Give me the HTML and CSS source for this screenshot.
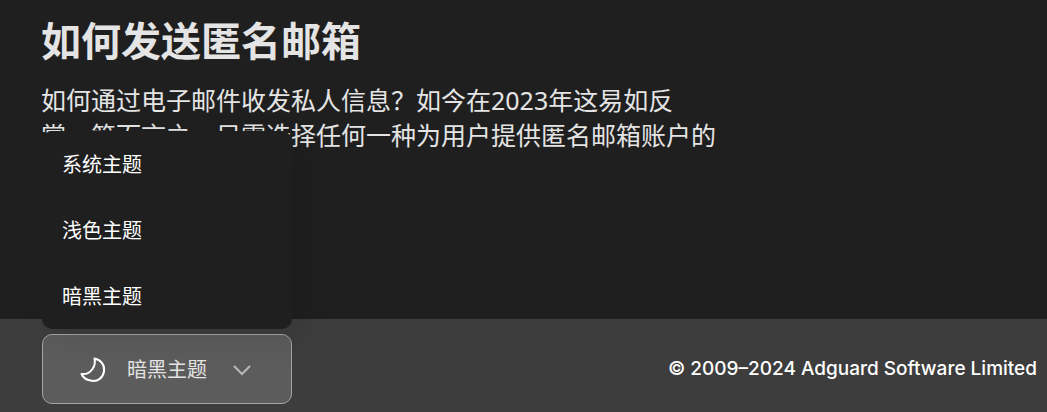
FILE: index.html
```html
<!DOCTYPE html>
<html lang="zh-CN">
<head>
    <meta charset="UTF-8">
    <meta name="viewport" content="width=device-width, initial-scale=1.0">
    <title>如何发送匿名邮箱</title>
    <link rel="stylesheet" href="styles.css">
</head>
<body>
    <main class="article">
        <h1>如何发送匿名邮箱</h1>
        <p>如何通过电子邮件收发私人信息？如今在2023年这易如反掌。简而言之，只需选择任何一种为用户提供匿名邮箱账户的</p>
    </main>

    <footer class="footer">
        <div class="theme">
            <div class="theme-menu" id="themeMenu">
                <button type="button">系统主题</button>
                <button type="button">浅色主题</button>
                <button type="button">暗黑主题</button>
            </div>
            <button type="button" class="theme-toggle" aria-expanded="true" aria-controls="themeMenu">
                <svg class="moon" viewBox="0 0 26 26" aria-hidden="true">
                    <path d="M14.5 1.5C21 3 25 8 24 14.5C23 21 17.500 24.500 12 23.800C7 23.300 3 20.500 1.500 17C5.500 17.500 10 15.500 12.500 12C14.800 8.800 15.300 5 14.500 1.500Z"/>
                </svg>
                <span>暗黑主题</span>
                <svg class="arrow" viewBox="0 0 20 20" aria-hidden="true">
                    <path d="M2 6L10 14L18 6"/>
                </svg>
            </button>
        </div>
        <span class="copyright">© 2009–2024 Adguard Software Limited</span>
    </footer>
</body>
</html>
```
FILE: styles.css
```css
* {
    box-sizing: border-box;
}

body {
    display: flex;
    flex-direction: column;
    min-height: 100vh;
    margin: 0;
    background-color: #1f1f1f;
    color: #e4e4e4;
    font-family: "Noto Sans", "Noto Sans CJK SC", sans-serif;
}

.article {
    flex: 1;
    padding: 15px 41px 0;
}

h1 {
    margin: 0;
    font-size: 40px;
    line-height: 52px;
}

p {
    max-width: 680px;
    margin: 16px 0 0;
    font-size: 25px;
    line-height: 35px;
}

button {
    border: 0;
    font-family: inherit;
    font-size: 20px;
    line-height: 26px;
    cursor: pointer;
}

.footer {
    display: flex;
    align-items: center;
    justify-content: space-between;
    padding: 15px 10px 8px 42px;
    background-color: #3d3d3d;
}

.theme {
    position: relative;
    width: 250px;
}

.theme-toggle {
    display: flex;
    align-items: center;
    width: 100%;
    height: 70px;
    padding: 2px 39px 0 37px;
    border: 1px solid #a4a4a4;
    border-radius: 10px;
    background-color: #5c5c5c;
    color: #e4e4e4;
}

/* opens upwards, over the article */
.theme-menu {
    position: absolute;
    bottom: calc(100% + 5px);
    left: 0;
    width: 100%;
    border-radius: 10px;
    background-color: #1f1f1f;
    box-shadow: 10px 10px 30px rgba(0, 0, 0, 0.1);
}

.theme-menu button {
    display: block;
    width: 100%;
    padding: 21px 20px 19px;
    background: none;
    color: #fff;
    text-align: left;
}

.moon {
    width: 26px;
    height: 26px;
    margin-right: 21px;
    fill: none;
    stroke: #fff;
    stroke-width: 2;
    stroke-linejoin: round;
}

.arrow {
    width: 20px;
    height: 20px;
    margin-left: auto;
    fill: none;
    stroke: #b8b8b8;
    stroke-width: 2;
}

.copyright {
    padding-bottom: 2px;
    color: #fff;
    font-family: Inter, sans-serif;
    font-size: 19px;
    font-weight: 500;
}
```
